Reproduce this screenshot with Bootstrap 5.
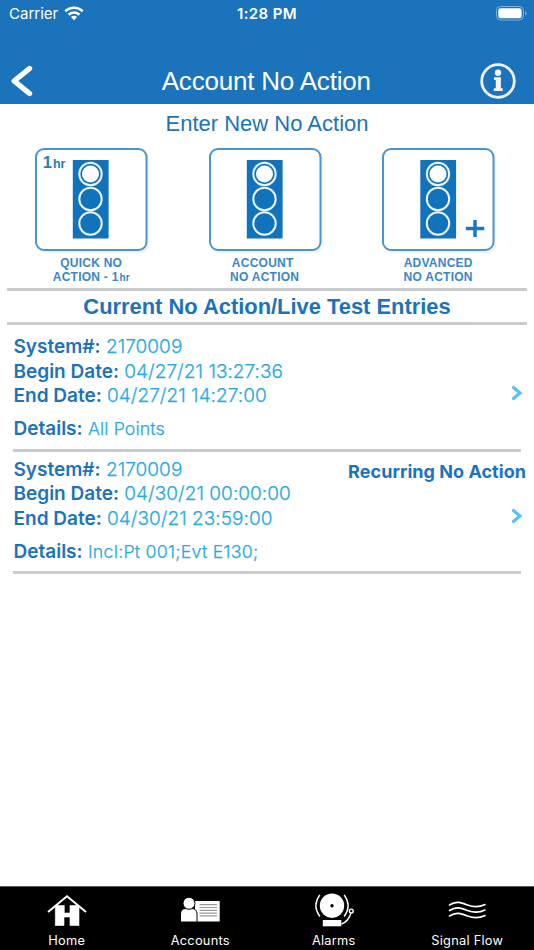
<!DOCTYPE html>
<html lang="en">
<head>
<meta charset="utf-8">
<meta name="viewport" content="width=device-width, initial-scale=1">
<title>Account No Action</title>
<link href="https://cdn.jsdelivr.net/npm/bootstrap@5.3.0/dist/css/bootstrap.min.css" rel="stylesheet">
<style>
body{font-family:Inter,"Liberation Sans",sans-serif;color:#1b73bb;background:#fff}
.screen{height:950px;overflow:hidden}
.topbar{height:103.5px;background:#1b73bb;color:#fff}
.status{height:28px;font-size:15px;line-height:28px;padding:0 7.500px 0 9px}
.status-time{font-weight:600;letter-spacing:.4px}
.titlebar{height:46px;margin-top:29.5px;padding:0 18px 0 10px}
.helv{font-family:"Liberation Sans",Arial,sans-serif}
.title{font-size:26px;line-height:46px;font-weight:400;letter-spacing:-.2px;padding-left:18.5px}
.subtitle{font-size:22px;line-height:40px;height:42.5px}
.tiles{height:142px;padding-left:33.2px;gap:53.5px}
.tile-art{width:120px;height:110px;display:block}
.tile-label{font-size:12px;line-height:14px;font-weight:700;color:#3b86c6;width:116px;letter-spacing:.25px}
.hr-unit{font-size:10px;line-height:15px;margin-left:1px;letter-spacing:0}
.tile{width:120px}
.rule{height:3px;flex:none;background:#c9cccf}
.rule-wide{margin:0 7px}
.rule-entry{margin:0 13px}
.heading{font-size:21.9px;line-height:31px;height:31px;font-weight:700}
.entry{height:123.5px;font-size:19px;line-height:24.5px;padding:10px 0 0 13.5px}
.entry-next{height:119.5px;padding-top:6px}
.entry b{font-weight:600}
.entry .val{color:#27a9e1;font-weight:350;letter-spacing:.04px;-webkit-text-stroke:.25px #27a9e1}
.details{margin-top:8.5px}
.entry .details .val{font-size:17.8px;letter-spacing:.1px}
.entry-next .details .val{letter-spacing:.24px}
.chev{margin-right:1px}
.side{padding-top:2px}
.side .chev{margin-top:23px}
.tag{font-size:18px;line-height:24.5px;font-weight:700;letter-spacing:.04px}
.tabs{height:64px;background:#000;color:#fff;border-top:1px solid #555;font-size:12.8px}
.tab{width:133.5px}
.tab svg{display:block}
.tab-name{line-height:17px;letter-spacing:.25px}
</style>
<script src="https://cdn.jsdelivr.net/npm/bootstrap@5.3.0/dist/js/bootstrap.bundle.min.js"></script>
</head>
<body>
<svg width="0" height="0" class="position-absolute"><defs>
<g id="frame">
<rect x="5" y="5" width="111" height="102" rx="8" fill="#e3e6e8" opacity=".5"/>
<rect x="3" y="3" width="110.500" height="101" rx="8" fill="#fff" stroke="#4a95d0" stroke-width="2"/>
</g>
<g id="light">
<rect x="39.800" y="14" width="35.800" height="78.500" fill="#1273bd"/>
<g fill="none" stroke="#eef5fb" stroke-width="2"><circle cx="57.500" cy="28" r="11.200"/><circle cx="57.500" cy="53" r="11.200"/><circle cx="57.500" cy="77.500" r="11.200"/></g>
<circle cx="57.500" cy="28" r="8.500" fill="#fff"/>
</g>
<path id="chevron" d="M4.500 3.500l6.500 5.500-6.500 5.500" fill="none" stroke="#5ac0fa" stroke-width="3.200" stroke-linecap="round"/>
</defs></svg>
<main class="screen d-flex flex-column">
<header class="topbar">
 <div class="status d-flex justify-content-between align-items-center position-relative">
  <div class="d-flex align-items-center"><span>Carrier</span>
   <svg class="ms-1" width="24" height="17" viewBox="-2 0 24 17" fill="none" stroke="#fff" stroke-width="2.600"><path d="M1.300 5.300a12.400 12.400 0 0 1 17.400 0M4.600 8.700a7.700 7.700 0 0 1 10.800 0"/><path d="M10 14.200 6.900 11.100a4.400 4.400 0 0 1 6.200 0z" fill="#fff" stroke="none"/></svg></div>
  <svg width="31" height="16" viewBox="0 0 31 16"><rect x=".5" y=".5" width="27" height="13.500" rx="4" fill="none" stroke="#7dafd9"/><rect x="2.300" y="2.300" width="23.400" height="9.900" rx="2.300" fill="#fff"/><path d="M29.200 5v4.500q1.500-.7 1.500-2.250t-1.500-2.250" fill="#7dafd9"/></svg>
  <span class="status-time position-absolute start-50 translate-middle-x">1:28 PM</span>
 </div>
 <div class="titlebar d-flex justify-content-between align-items-center">
  <svg width="24" height="32" viewBox="0 0 24 32"><path d="M19.500 3.500 4.200 16l15.300 12.500" fill="none" stroke="#fff" stroke-width="5.400" stroke-linecap="round" stroke-linejoin="round"/></svg>
  <h1 class="title helv m-0">Account No Action</h1>
  <svg width="36" height="36" viewBox="0 0 36 36"><circle cx="18" cy="18" r="16.300" fill="none" stroke="#f2f1f0" stroke-width="2.800"/><circle cx="18" cy="9.800" r="3.200" fill="#f5f4f3"/><path d="M14 14.300h6.900v11h1.800v2.700h-8.900v-2.700h2v-8.300h-1.800z" fill="#f5f4f3"/></svg>
 </div>
</header>
<div class="subtitle helv text-center">Enter New No Action</div>
<div class="tiles d-flex">
 <div class="tile"><svg class="tile-art" viewBox="0 0 120 110"><use href="#frame"/><use href="#light"/><text x="9.800" y="22" font-family="Liberation Sans" font-weight="700" font-size="16.500" fill="#287dc1">1<tspan dx="1" font-size="12.500">hr</tspan></text></svg><div class="tile-label helv text-center"><div>QUICK NO</div><div class="d-flex justify-content-center"><span>ACTION - 1</span><span class="hr-unit">hr</span></div></div></div>
 <div class="tile"><svg class="tile-art" viewBox="0 0 120 110"><use href="#frame"/><use href="#light"/></svg><div class="tile-label helv text-center"><div class="pe-1">ACCOUNT</div><div>NO ACTION</div></div></div>
 <div class="tile"><svg class="tile-art" viewBox="0 0 120 110"><use href="#frame"/><use href="#light" x=".5"/><path d="M85.800 82.500h18.500M95 74v17" stroke="#1c77be" stroke-width="3.500"/></svg><div class="tile-label helv text-center"><div>ADVANCED</div><div>NO ACTION</div></div></div>
</div>
<div class="rule rule-wide"></div>
<h2 class="heading helv text-center m-0">Current No Action/Live Test Entries</h2>
<div class="rule rule-wide"></div>
<section class="entry d-flex justify-content-between">
 <div><div><b>System#:</b> <span class="val">2170009</span></div><div><b>Begin Date:</b> <span class="val">04/27/21 13:27:36</span></div><div><b>End Date:</b> <span class="val">04/27/21 14:27:00</span></div><div class="details"><b>Details:</b> <span class="val">All Points</span></div></div>
 <div class="pe-2"><svg class="chev d-block mt-5" width="16" height="18" viewBox="0 -1 16 18"><use href="#chevron"/></svg></div>
</section>
<div class="rule rule-entry"></div>
<section class="entry entry-next d-flex justify-content-between">
 <div><div><b>System#:</b> <span class="val">2170009</span></div><div><b>Begin Date:</b> <span class="val">04/30/21 00:00:00</span></div><div><b>End Date:</b> <span class="val">04/30/21 23:59:00</span></div><div class="details"><b>Details:</b> <span class="val">Incl:Pt 001;Evt E130;</span></div></div>
 <div class="side d-flex flex-column align-items-end pe-2"><span class="tag">Recurring No Action</span><svg class="chev" width="16" height="18" viewBox="0 0 16 18"><use href="#chevron"/></svg></div>
</section>
<div class="rule rule-entry"></div>
<nav class="tabs d-flex mt-auto">
 <div class="tab d-flex flex-column align-items-center"><svg width="48" height="45" viewBox="0 0 48 45"><path d="M5 25 24 9.300 43 25" fill="none" stroke="#fff" stroke-width="1.900"/><path d="M12.300 18.500h9v7.500h5.700v-7.500h9V38.500H27v-8.500h-6v8.500h-8.700z" fill="#fff" stroke="#fff" stroke-width=".6" stroke-linejoin="round"/></svg><span class="tab-name">Home</span></div>
 <div class="tab d-flex flex-column align-items-center"><svg width="48" height="45" viewBox="0 0 48 45"><rect x="19" y="14" width="24.700" height="20.500" fill="#fff"/><path d="M23.500 17.700h17.500M23.500 20.500h17.500M23.500 23.300h17.500M23.500 26.100h17.500M23.500 28.900h17.500" stroke="#999" stroke-width="1.200"/><path d="M4.500 35v-8q0-5 5-5.500h6.500q5 .5 5 5.500v8z" fill="#fff" stroke="#000" stroke-width="1"/><circle cx="13" cy="16.300" r="6" fill="#fff" stroke="#000"/></svg><span class="tab-name">Accounts</span></div>
 <div class="tab d-flex flex-column align-items-center"><svg width="48" height="45" viewBox="0 0 48 45"><circle cx="22" cy="18.700" r="12.200" fill="#fff"/><circle cx="22" cy="18.700" r="1.700"/><rect x="12.800" y="33" width="18.500" height="6.300" fill="#fff"/><g fill="none" stroke="#fff" stroke-width="1.400"><path d="M9.800 7.800Q2 18.500 9.800 29.500M34.200 7.800Q42 18.500 34.200 29.500M31.500 37Q38.500 34.500 41 26"/><circle cx="41.300" cy="24" r="1.900"/></g></svg><span class="tab-name">Alarms</span></div>
 <div class="tab d-flex flex-column align-items-center"><svg width="48" height="45" viewBox="0 0 48 45"><g fill="none" stroke="#fff" stroke-width="1.600" stroke-linecap="round"><path id="wave" d="M6.500 18C13 13.500 18 15.500 24.500 18S36 20.500 42 17.500"/><use href="#wave" y="5.500"/><use href="#wave" y="11"/></g></svg><span class="tab-name">Signal Flow</span></div>
</nav>
</main>
</body>
</html>
